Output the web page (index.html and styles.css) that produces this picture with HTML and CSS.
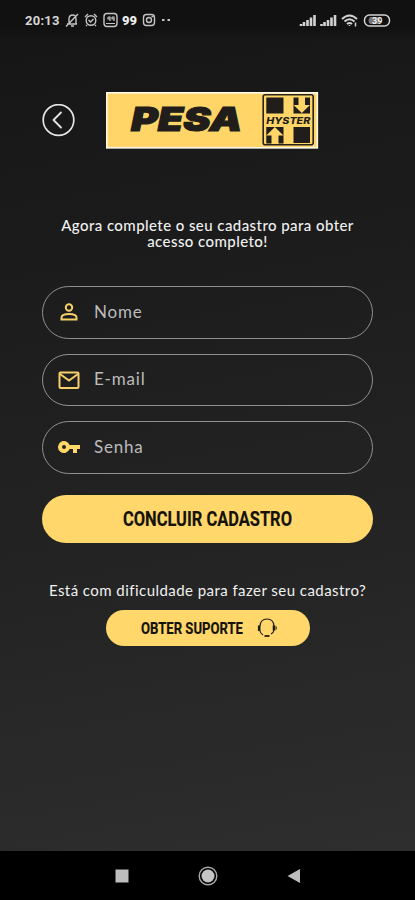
FILE: index.html
```html
<!DOCTYPE html>
<html lang="pt-BR">
<head>
<meta charset="utf-8">
<meta name="viewport" content="width=device-width, initial-scale=1">
<title>Cadastro</title>
<link rel="stylesheet" href="styles.css">
</head>
<body>
<div class="status">
  <span class="time">20:13</span>
  <svg class="notices" width="110" height="18" viewBox="0 0 110 18" fill="none" stroke="#c4c4c4" stroke-width="1.4">
    <path d="M2 13h10M4 12.500V7.500Q4.500 4 7.500 4Q11 4 11 8v4.500M6 15h3M1 15.500L13 3"/>
    <circle cx="26" cy="9.500" r="4.800"/><path d="M20 6l3-3M32 6l-3-3M23.500 9l2 2 3-3M22 14l-1 1M30 14l1 1"/>
    <rect x="39" y="2.500" width="13" height="13" rx="3"/><path d="M41 12.500h9M43 6h2v4M47 6h2v4M43 6v2h2M47 6v2h2" stroke-width="1.200"/>
    <text x="57" y="13.800" class="app" textLength="15" lengthAdjust="spacingAndGlyphs">99</text>
    <rect x="78.500" y="3.500" width="11" height="11" rx="3"/><circle cx="84" cy="9" r="2.500"/><path d="M86.500 5.500h2"/>
    <path d="M97 9h2.500M102.500 9h2.500" stroke-width="2.200"/>
  </svg>
  <svg class="signals" width="94" height="18" viewBox="0 0 94 18" fill="none" stroke="#d2d2d2">
    <path d="M2 15v-2M5 15v-4M8.500 15V9M12 15V6.500M15.500 15V4M22.500 15v-2M25.500 15v-4M29 15V9M32.500 15V6.500M36 15V4" stroke-width="2.600"/>
    <path d="M43 8q7.500-7 15 0M45.500 10.500q5-4.500 10 0M48 13q2.500-2 5 0" stroke-width="2"/><path d="M50.500 15v-1M56.500 11.500v4" stroke-width="1.500"/>
    <rect x="65.500" y="4" width="25" height="11" rx="5" stroke-width="1.500"/><path d="M71 6h10v7H71q-3-3.500 0-7z" fill="#777" stroke="none"/>
    <text x="73" y="13" class="charge">39</text>
  </svg>
</div>
<main class="screen">
  <header class="top">
    <svg class="back" width="34" height="34" viewBox="0 0 34 34" fill="none" stroke="#e5e5e5" stroke-width="1.700">
      <circle cx="16.500" cy="16" r="15.300"/><path d="M19 8.500L11.500 16l7.500 7.500" stroke-width="1.800" stroke-linecap="round" stroke-linejoin="round"/>
    </svg>
    <svg class="logo" width="213" height="57" viewBox="0 0 213 57">
      <rect x=".800" y=".800" width="210.500" height="55" fill="#ffd568" stroke="#fff8e6" stroke-width="1.700"/>
      <text class="brand" x="25" y="39" textLength="111" lengthAdjust="spacingAndGlyphs">PESA</text>
      <path d="M207.500 1v55" stroke="#fff8e6" stroke-width="1"/>
      <rect x="157.200" y="2.800" width="50" height="50" rx="2" fill="#ffd568" stroke="#29241b" stroke-width="1.600"/>
      <path fill="#211d1a" d="M160.300 5.500H177.500v16H160.300zM187.500 35h16.500v16h-16.500z"/>
      <path fill="#211d1a" d="M187.500 5.500H204v16h-16.500zM160.300 35h17.200v16.500h-17.200z"/>
      <path fill="#ffd568" d="M192.500 5h6.500v8h5l-8.200 8-8.200-8h4.900zM168.900 35l8.600 8.500h-5V52h-7v-8.500h-5.200z"/>
      <text class="hyster" x="160.300" y="32" textLength="44" lengthAdjust="spacingAndGlyphs">HYSTER</text>
    </svg>
  </header>
  <p class="intro">Agora complete o seu cadastro para obter<br>acesso completo!</p>
  <form class="fields">
    <div class="field">
      <svg width="24" height="24" viewBox="0 0 24 24" fill="none" stroke="#f5cf68" stroke-width="2"><circle cx="12" cy="7.500" r="3.200"/><path d="M4.500 19.500v-2q0-3.500 7.500-3.500t7.500 3.500v2z"/></svg>
      <span class="nome">Nome</span>
    </div>
    <div class="field">
      <svg width="24" height="24" viewBox="0 0 24 24" fill="none" stroke="#f5cf68" stroke-width="2"><rect x="2.500" y="4.500" width="19" height="15.500" rx="1"/><path d="M3 6l9 6.500L21 6"/></svg>
      <span class="email">E-mail</span>
    </div>
    <div class="field">
      <svg width="24" height="24" viewBox="0 0 24 24" fill="#ffd769"><path fill-rule="evenodd" d="M12.600 10a6 6 0 1 0 0 4H16v4h4v-4h3v-4zM7 14a2 2 0 1 1 0-4 2 2 0 0 1 0 4z"/></svg>
      <span class="senha">Senha</span>
    </div>
  </form>
  <div class="button primary">
    <svg width="174" height="30" viewBox="-2 -3 174 30"><text class="label" x="0" y="19" textLength="169" lengthAdjust="spacingAndGlyphs">CONCLUIR CADASTRO</text></svg>
  </div>
  <p class="help">Está com dificuldade para fazer seu cadastro?</p>
  <div class="button support">
    <svg width="106" height="26" viewBox="-2 -3 106 26"><text class="label small" x="0" y="16" textLength="102" lengthAdjust="spacingAndGlyphs">OBTER SUPORTE</text></svg>
    <svg class="headset" width="22" height="22" viewBox="0 0 22 22" fill="none" stroke="#211c12"><path d="M4 9Q4.500 2 11 2t7 7M4 14q.500 2.500 3 4M18 13q-.500 3-3 4" stroke-width="1.200"/><path d="M3.200 8.500v5.500M18 8.500v5" stroke-width="2.600"/><path d="M8.500 19h5" stroke-width="1.800"/><path d="M20.200 9.500v3" stroke-width="1"/></svg>
  </div>
</main>
<nav class="nav">
  <svg width="14" height="14" viewBox="0 0 14 14"><path d="M.5.500h13v13H.5z" fill="#bdbdbd"/></svg>
  <svg width="20" height="20" viewBox="0 0 20 20"><circle cx="10" cy="10" r="8.800" fill="none" stroke="#aaa" stroke-width="1.400"/><circle cx="10" cy="10" r="6.500" fill="#c4c4c4"/></svg>
  <svg width="14" height="16" viewBox="0 0 14 16"><path d="M.5 8L13 1v14z" fill="#bdbdbd"/></svg>
</nav>
</body>
</html>
```
FILE: styles.css
```css
* { box-sizing: border-box; }
body {
  margin: 0;
  width: 415px;
  height: 900px;
  overflow: hidden;
  display: flex;
  flex-direction: column;
  color: #f0f0f0;
  font-family: Lato, "Open Sans", sans-serif;
  background: linear-gradient(170deg, #151515 0%, #1e1e1e 38%, #252525 66%, #2e2e2e 95%);
}
svg { display: block; flex: none; }
.status {
  height: 40px;
  flex: none;
  display: flex;
  align-items: center;
  padding: 0 22px 0 25px;
  background: linear-gradient(#111 70%, transparent);
}
.time { width: 40px; font: bold 13px Roboto, sans-serif; color: #d6d6d6; letter-spacing: .25px; }
.signals { margin-left: auto; }
.app { font: 900 13px Roboto, sans-serif; fill: #eee; stroke: none; }
.charge { font: bold 9px Roboto, sans-serif; fill: #eee; stroke: none; }
.screen { flex: 1; padding: 52px 42px 0; }
.top { display: flex; align-items: center; height: 57px; gap: 30px; }
.brand { font: italic 900 33px Inter, sans-serif; fill: #211d1a; stroke: #211d1a; stroke-width: 1.2px; }
.hyster { font: italic 800 9.5px Inter, sans-serif; fill: #211d1a; }
.intro { margin: 69px 0 0; text-align: center; font-size: 15px; line-height: 15.5px; font-weight: 500; white-space: nowrap; letter-spacing: .43px; }
.fields { display: grid; gap: 15px; margin-top: 37px; }
.field {
  height: 52.5px;
  border: 1px solid #909090;
  border-radius: 27px;
  display: flex;
  align-items: center;
  gap: 13px;
  padding-left: 14px;
  font-size: 17px;
  color: #bcbcbc;
}
.field span { padding-bottom: 2px; letter-spacing: .8px; }
.button { display: flex; align-items: center; justify-content: center; background: #ffd76b; }
.primary { height: 48px; margin-top: 21px; border-radius: 24px; }
.label { font: bold 20px "Liberation Sans Narrow", Roboto, sans-serif; fill: #15120c; stroke: #15120c; stroke-width: .2px; }
.small { font-size: 16px; }
.help { margin: 38px 0 0; height: 20px; line-height: 19px; text-align: center; font-size: 15px; white-space: nowrap; letter-spacing: .45px; }
.support { width: 204px; height: 36px; margin: 9px 0 0 64px; border-radius: 18px; gap: 11px; }
.nav {
  height: 49px;
  flex: none;
  background: #000;
  display: flex;
  align-items: center;
  padding-left: 115px;
  gap: 69px;
}
```
